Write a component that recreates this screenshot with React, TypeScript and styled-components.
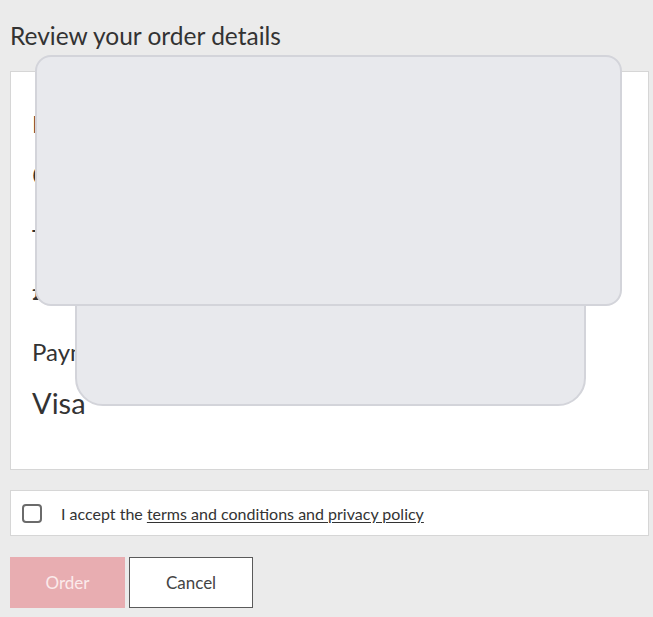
import React from "react";
import styled, { createGlobalStyle } from "styled-components";

const GlobalStyle = createGlobalStyle`
  html, body {
    margin: 0;
    padding: 0;
    background: #ebebeb;
  }
  body {
    font-family: "Lato", "Noto Sans", sans-serif;
    color: #333333;
    -webkit-font-smoothing: antialiased;
  }
`;

const Page = styled.div`
  padding: 21px 4px 10px 10px;
  width: 639px;
`;

const Title = styled.h1`
  margin: 0 0 21px;
  font-size: 24.5px;
  line-height: 29px;
  font-weight: 400;
  color: #333333;
`;

const Card = styled.section`
  position: relative;
  box-sizing: border-box;
  height: 399px;
  background: #ffffff;
  border: 1px solid #d6d6d6;
  padding: 37px 21px 0;
  display: flex;
  flex-direction: column;
  gap: 31px;
`;

const Group = styled.div`
  display: flex;
  flex-direction: column;
  gap: 19px;
`;

const Label = styled.div`
  font-size: 24px;
  line-height: 29px;
  color: #333333;
`;

const Value = styled.div`
  font-size: 29px;
  line-height: 35px;
  color: #333333;
`;

const Overlay = styled.div<{ $left: number; $top: number; $w: number; $h: number; $r: string; $z: number }>`
  position: absolute;
  left: ${(p) => p.$left}px;
  top: ${(p) => p.$top}px;
  width: ${(p) => p.$w}px;
  height: ${(p) => p.$h}px;
  box-sizing: border-box;
  background: #e8e9ed;
  border: 2px solid #d3d4da;
  border-radius: ${(p) => p.$r};
  z-index: ${(p) => p.$z};
`;

const AcceptRow = styled.label`
  box-sizing: border-box;
  margin-top: 20px;
  height: 46px;
  background: #ffffff;
  border: 1px solid #d6d6d6;
  display: flex;
  align-items: center;
  padding-left: 11px;
  font-size: 16px;
  color: #333333;
`;

const Box = styled.span`
  box-sizing: border-box;
  width: 20px;
  height: 19px;
  border: 2px solid #6b6b6b;
  border-radius: 4px;
  margin-right: 19px;
  flex: none;
`;

const Link = styled.a`
  color: #333333;
  text-decoration: underline;
  text-underline-offset: 2px;
`;

const Actions = styled.div`
  margin-top: 21px;
  display: flex;
  gap: 4px;
`;

const Button = styled.button<{ $primary?: boolean; $w: number }>`
  box-sizing: border-box;
  width: ${(p) => p.$w}px;
  height: 51px;
  font-family: "Lato", "Noto Sans", sans-serif;
  font-size: 17px;
  border: ${(p) => (p.$primary ? "none" : "1px solid #5a5a5a")};
  background: ${(p) => (p.$primary ? "#e8adb1" : "#ffffff")};
  color: ${(p) => (p.$primary ? "#fbeaeb" : "#444444")};
  padding: 0;
`;

export default function App() {
  return (
    <>
      <GlobalStyle />
      <Page>
        <Title>Review your order details</Title>
        <Card>
          <Group>
            <Label>Plan</Label>
            <Value>Connect 50GB</Value>
          </Group>
          <Group>
            <Label>Total monthly cost</Label>
            <Value>£25.00 a month</Value>
          </Group>
          <Group>
            <Label>Payment method</Label>
            <Value>Visa</Value>
          </Group>
          <Overlay $left={64} $top={128} $w={511} $h={206} $r="0 0 28px 28px" $z={1} />
          <Overlay $left={24} $top={-17} $w={587} $h={251} $r="16px" $z={2} />
        </Card>
        <AcceptRow>
          <Box />
          <span>
            I accept the <Link>terms and conditions and privacy policy</Link>
          </span>
        </AcceptRow>
        <Actions>
          <Button $primary $w={115}>Order</Button>
          <Button $w={124}>Cancel</Button>
        </Actions>
      </Page>
    </>
  );
}
